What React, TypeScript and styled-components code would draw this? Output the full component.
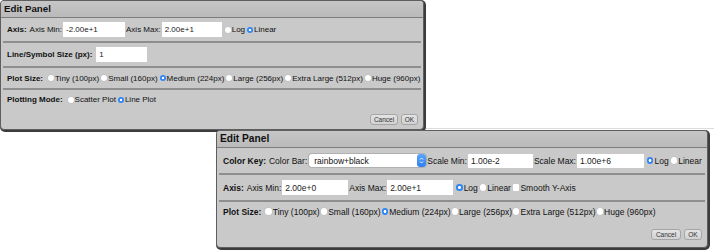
import React from 'react';
import styled, { createGlobalStyle } from 'styled-components';

const GlobalStyle = createGlobalStyle`
  html, body { margin: 0; padding: 0; background: #fff; }
  body { font-family: "Liberation Sans", Arial, sans-serif; }
`;

const Canvas = styled.div`
  position: relative;
  width: 714px;
  height: 250px;
  overflow: hidden;
  background: #fff;
`;

const Window = styled.div<{ $x: number; $y: number; $w: number; $h: number; $fs: number }>`
  position: absolute;
  left: ${p => p.$x}px;
  top: ${p => p.$y}px;
  width: ${p => p.$w}px;
  height: ${p => p.$h}px;
  box-sizing: border-box;
  background: #c9c9c9;
  border: 1px solid #5e5e5e;
  border-radius: 4px;
  box-shadow: 1px 1px 0 1px #3c3c3c;
  font-size: ${p => p.$fs}px;
  color: #111;
  display: flex;
  flex-direction: column;
  overflow: hidden;
`;

const TitleBar = styled.div<{ $fs: number }>`
  height: 17px;
  box-sizing: border-box;
  flex: none;
  padding-left: 3px;
  line-height: 16px;
  font-size: ${p => p.$fs}px;
  font-weight: bold;
  background: linear-gradient(#c6c6c6, #bababa);
  border-bottom: 1px solid #7d7d7d;
`;

const Row = styled.div<{ $h: number; $last?: boolean }>`
  height: ${p => p.$h}px;
  box-sizing: border-box;
  flex: none;
  margin: 0 2px;
  padding-left: 4px;
  display: flex;
  align-items: center;
  white-space: nowrap;
  border-bottom: ${p => (p.$last ? 'none' : '2px solid #8e8e8e')};
`;

const Label = styled.span`
  font-weight: bold;
  margin-right: 3px;
`;

const Field = styled.span<{ $w: number; $h: number }>`
  display: inline-flex;
  align-items: center;
  box-sizing: border-box;
  width: ${p => p.$w}px;
  height: ${p => p.$h}px;
  margin: 0 1px 0 1px;
  padding-left: 3px;
  background: #fff;
  color: #222;
`;

const Select = styled.span`
  display: inline-flex;
  align-items: center;
  justify-content: space-between;
  box-sizing: border-box;
  width: 117px;
  height: 13px;
  margin: 0 1px 0 2px;
  padding-left: 5px;
  background: #fff;
  border-radius: 3px;
  box-shadow: 0 0 0 1px #b0b0b0;
`;

const Stepper = styled.span`
  display: inline-flex;
  align-items: center;
  justify-content: center;
  width: 9px;
  height: 13px;
  border-radius: 3px;
  background: linear-gradient(#5ea5f8, #2f7ff0);
`;

const Radio = styled.span<{ $on?: boolean; $s: number; $ml: number }>`
  display: inline-block;
  box-sizing: border-box;
  width: ${p => p.$s}px;
  height: ${p => p.$s}px;
  margin: 0 1px 0 ${p => p.$ml}px;
  border-radius: 50%;
  flex: none;
  background: ${p => (p.$on ? 'radial-gradient(circle, #fff 0 1.3px, #2f86f6 1.6px)' : '#fff')};
  box-shadow: ${p => (p.$on ? 'none' : '0 0 0 0.5px #bdbdbd')};
`;

const Check = styled.span<{ $s: number }>`
  display: inline-block;
  width: ${p => p.$s}px;
  height: ${p => p.$s}px;
  margin: 0 1px 0 2px;
  border-radius: 1px;
  background: #fff;
  flex: none;
`;

const Footer = styled.div<{ $pb: number }>`
  flex: 1;
  display: flex;
  justify-content: flex-end;
  align-items: flex-end;
  gap: 3px;
  padding: 0 5px ${p => p.$pb}px 0;
`;

const Button = styled.span<{ $w: number }>`
  display: inline-flex;
  align-items: center;
  justify-content: center;
  box-sizing: border-box;
  width: ${p => p.$w}px;
  height: 11px;
  font-size: 6.5px;
  color: #333;
  background: linear-gradient(#e4e4e4, #d2d2d2);
  border: 1px solid #a5a5a5;
  border-radius: 3px;
`;

const FrameLine = styled.div`
  position: absolute;
  left: 424px;
  right: 0;
  top: 128px;
  height: 1px;
  background: #dcdcdc;
`;

type Opt = { label: string; on?: boolean };

const Radios: React.FC<{ opts: Opt[]; s: number; ml: number }> = ({ opts, s, ml }) => (
  <>
    {opts.map(o => (
      <React.Fragment key={o.label}>
        <Radio $on={o.on} $s={s} $ml={ml} />
        <span>{o.label}</span>
      </React.Fragment>
    ))}
  </>
);

const sizes = (): Opt[] => [
  { label: 'Tiny (100px)' },
  { label: 'Small (160px)' },
  { label: 'Medium (224px)', on: true },
  { label: 'Large (256px)' },
  { label: 'Extra Large (512px)' },
  { label: 'Huge (960px)' },
];

const StepperIcon = () => (
  <svg width="5" height="9" viewBox="0 0 5 9">
    <path d="M1 3.5 L2.5 2 L4 3.5 M1 5.5 L2.5 7 L4 5.5" fill="none" stroke="#fff" strokeWidth="0.9" />
  </svg>
);

const FirstPanel = () => (
  <Window $x={0} $y={0} $w={424} $h={130} $fs={8}>
    <TitleBar $fs={9.7}>Edit Panel</TitleBar>
    <Row $h={25}>
      <Label>Axis:</Label>
      <span>Axis Min:</span>
      <Field $w={62} $h={15}>-2.00e+1</Field>
      <span>Axis Max:</span>
      <Field $w={60} $h={15}>2.00e+1</Field>
      <Radios s={6} ml={2} opts={[{ label: 'Log' }, { label: 'Linear', on: true }]} />
    </Row>
    <Row $h={25}>
      <Label>Line/Symbol Size (px):</Label>
      <Field $w={51} $h={15}>1</Field>
    </Row>
    <Row $h={22}>
      <Label>Plot Size:</Label>
      <Radios s={6} ml={2} opts={sizes()} />
    </Row>
    <Row $h={19} $last>
      <Label>Plotting Mode:</Label>
      <Radios s={6} ml={2} opts={[{ label: 'Scatter Plot' }, { label: 'Line Plot', on: true }]} />
    </Row>
    <Footer $pb={4}>
      <Button $w={28}>Cancel</Button>
      <Button $w={17}>OK</Button>
    </Footer>
  </Window>
);

const SecondPanel = () => (
  <Window $x={216} $y={130} $w={492} $h={118} $fs={8.5}>
    <TitleBar $fs={10.2}>Edit Panel</TitleBar>
    <Row $h={27}>
      <Label>Color Key:</Label>
      <span>Color Bar:</span>
      <Select>
        rainbow+black
        <Stepper>
          <StepperIcon />
        </Stepper>
      </Select>
      <span>Scale Min:</span>
      <Field $w={65} $h={14}>1.00e-2</Field>
      <span>Scale Max:</span>
      <Field $w={67} $h={14}>1.00e+6</Field>
      <Radios s={6.5} ml={2} opts={[{ label: 'Log', on: true }, { label: 'Linear' }]} />
    </Row>
    <Row $h={27}>
      <Label>Axis:</Label>
      <span>Axis Min:</span>
      <Field $w={66} $h={15}>2.00e+0</Field>
      <span>Axis Max:</span>
      <Field $w={66} $h={15}>2.00e+1</Field>
      <Radios s={6.5} ml={2} opts={[{ label: 'Log', on: true }, { label: 'Linear' }]} />
      <Check $s={6.5} />
      <span>Smooth Y-Axis</span>
    </Row>
    <Row $h={19} $last>
      <Label>Plot Size:</Label>
      <Radios s={6.5} ml={1} opts={sizes()} />
    </Row>
    <Footer $pb={7}>
      <Button $w={30}>Cancel</Button>
      <Button $w={18}>OK</Button>
    </Footer>
  </Window>
);

export default function App() {
  return (
    <>
      <GlobalStyle />
      <Canvas>
        <FrameLine />
        <FirstPanel />
        <SecondPanel />
      </Canvas>
    </>
  );
}
